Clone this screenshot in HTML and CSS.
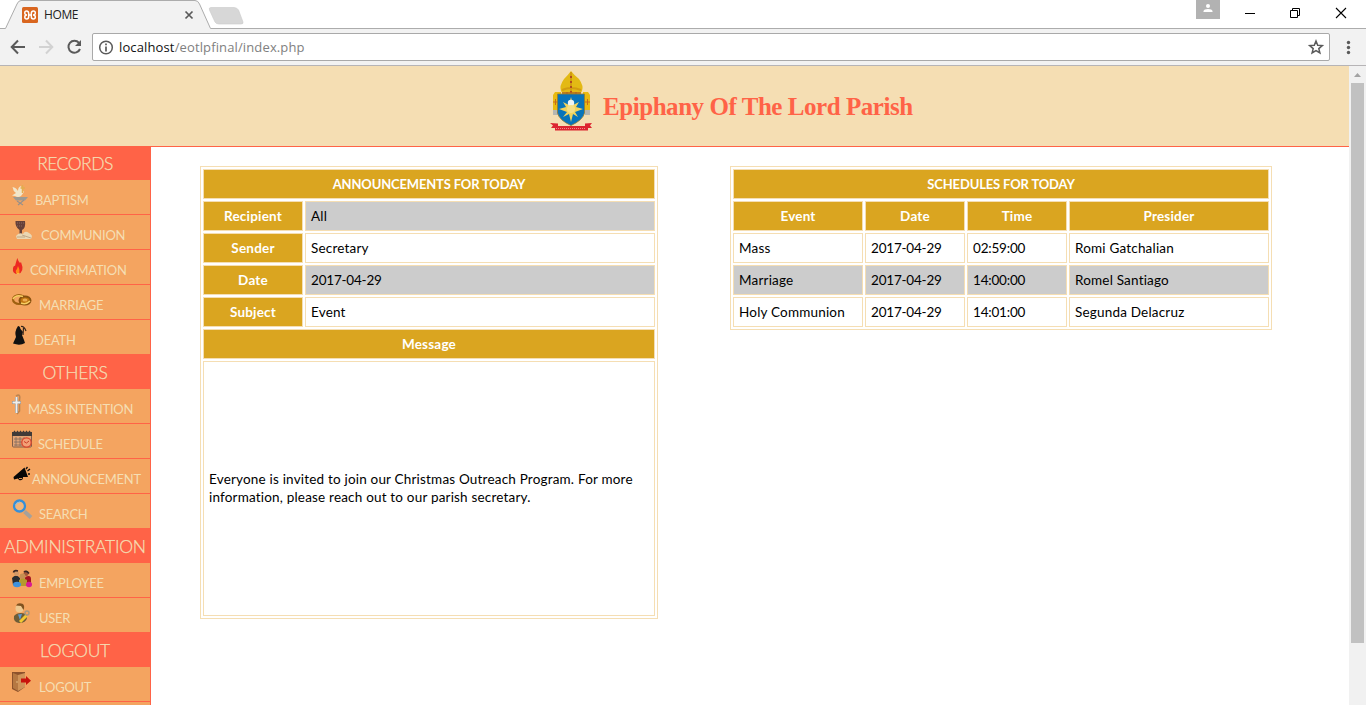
FILE: index.html
```html
<!DOCTYPE html>
<html lang="en">
<head>
<meta charset="utf-8">
<title>HOME</title>
<link rel="stylesheet" href="styles.css">
</head>
<body>
<header class="tabstrip">
  <svg class="tabstrip-art" width="1366" height="29" viewBox="0 0 1366 29">
    <path d="M0 28.5H5.5L17 4Q18.500 .5 21 .5H195Q198 .5 199.500 4L210.500 28.500H1366V29H0Z" fill="#f2f2f2"/>
    <path d="M0 28.500H5.500L17 4Q18.500 .5 21 .5H195Q198 .5 199.500 4L210.500 28.500H1366" fill="none" stroke="#acacac"/>
    <path d="M211 7.500H234Q237 7.500 238.500 10L243 22Q243.500 24 241 24H219Q216 24 215 22L209.500 10Q208.500 7.500 211 7.500Z" fill="#d7d7d7" stroke="#c9c9c9" stroke-width=".6"/>
    <rect x="22" y="7" width="16" height="16" rx="1.500" fill="#d9661f"/>
    <path d="M28.700 13.300Q28.500 11 26.700 11Q24.600 11 24.800 13.300Q25 15 27 15Q24.800 15 24.800 17Q24.800 19 26.700 19Q28.700 19 28.700 16.500V15H31.300V16.500Q31.300 19 33.300 19Q35.300 19 35.300 17Q35.300 15 33 15Q35.200 15 35.300 13.300Q35.400 11 33.300 11Q31.400 11 31.300 13.300V15H28.700Z" fill="none" stroke="#fff" stroke-width="1.500"/>
    <path d="M185.500 11.500L192.500 18.500M192.500 11.500L185.500 18.500" stroke="#5a5a5a" stroke-width="1.700"/>
    <rect x="1196" width="24" height="19" fill="#b2b2b2"/>
    <circle cx="1208" cy="6" r="2" fill="#fff"/>
    <path d="M1203.500 12V11Q1204 9 1208 9T1212.500 11V12Z" fill="#fff"/>
    <path d="M1245 13.500H1255" stroke="#000"/>
    <path d="M1290.500 10.500H1297.500V17.500H1290.500ZM1292.500 10V8.500H1299.500V15.500H1298" fill="none" stroke="#000"/>
    <path d="M1336 8L1346 18M1346 8L1336 18" stroke="#000" stroke-width="1.100"/>
  </svg>
  <span class="tab-title">HOME</span>
</header>
<div class="toolbar">
  <svg width="92" height="36" viewBox="0 0 92 36">
    <path d="M25 18H12M18 11.500L11.700 18L18 24.500" fill="none" stroke="#5a5a5a" stroke-width="2"/>
    <path d="M39 18H52M46 11.500L52.300 18L46 24.500" fill="none" stroke="#d2d2d2" stroke-width="2"/>
    <path d="M79 13.800A6 6 0 1 0 80 20" fill="none" stroke="#5a5a5a" stroke-width="2"/>
    <path d="M81 11V17H75Z" fill="#5a5a5a"/>
  </svg>
  <div class="address">
    <svg width="26" height="25" viewBox="0 0 26 25">
      <circle cx="13" cy="12.500" r="6.300" fill="none" stroke="#5a5a5a" stroke-width="1.500"/>
      <path d="M13 11.500V16.500M13 8.500V10.200" stroke="#5a5a5a" stroke-width="1.700"/>
    </svg>
    <span class="url">localhost<span class="url-path">/eotlpfinal/index.php</span></span>
    <svg class="star" width="28" height="25" viewBox="0 0 28 25">
      <path d="M15 6L16.700 10.300L21.300 10.600L17.800 13.600L18.900 18L15 15.600L11.100 18L12.200 13.600L8.700 10.600L13.300 10.300Z" fill="none" stroke="#5a5a5a" stroke-width="1.500"/>
    </svg>
  </div>
  <svg width="36" height="36" viewBox="0 0 36 36">
    <g fill="#5a5a5a"><circle cx="18.500" cy="13.500" r="1.700"/><circle cx="18.500" cy="18.500" r="1.700"/><circle cx="18.500" cy="23.500" r="1.700"/></g>
  </svg>
</div>
<div class="viewport">
  <div class="page">
    <div class="banner">
      <svg class="crest" width="44" height="62" viewBox="0 0 44 62">
        <path d="M13 30Q14 25 11 21Q9 16 14 9Q18 5 21 1Q24 5 29 9Q34 16 32 21Q29 25 30 30Z" fill="#e3b914"/>
        <path d="M21 2V30M12 20Q21 16 31 20" fill="none" stroke="#d29c10" stroke-width="2"/>
        <path d="M21 6V28" stroke="#b14b20" stroke-width="2" stroke-dasharray="2 3"/>
        <path d="M12 23H31M17 22V25M26 22V25" stroke="#b5691b" stroke-width="1.500"/>
        <path d="M5 22H11V40H3V25ZM33 22H38L40 25V40H33Z" fill="#e8ba12"/>
        <path d="M3 32H8M35 32H40M5.500 29V35M37.500 29V35" stroke="#c96a1a"/>
        <path d="M3 40H8V45H3ZM35 40H40V45H35Z" fill="#b7b7b1"/>
        <path d="M7.500 24H34.500V43Q33 50 21 55.500Q9 50 7.500 43Z" fill="#0874ba" stroke="#967b31" stroke-width=".8"/>
        <path d="M21 27L23 35L29 32L26 37L33 39L25 42L28 47L23 44L21 52L19 44L13 47L17 42L9 39L16 37L13 32L19 35Z" fill="#f2d35e"/>
        <circle cx="21" cy="33" r="3.200" fill="#eef4f4"/><circle cx="21" cy="39" r="4" fill="#f5df87"/>
        <path d="M0 53L8 53.500V56H35V53.500L42 53L40 55.500L42 58H38V60.500H5V58H1L3 55.500Z" fill="#dc2430"/>
        <path d="M6 58.500H36" stroke="#f3868c" stroke-dasharray="1 1"/>
      </svg>
      <h1 class="parish">Epiphany Of The Lord Parish</h1>
    </div>
    <div class="columns">
      <nav class="sidebar">
        <h2 class="group first">RECORDS</h2>
        <a class="item baptism"><svg width="23" height="34" viewBox="12 0 23 34">
          <path d="M12.500 7Q16 7.500 18 11Q18 7 21 6L22 9L24 12L21 16Q18 18 15 16L12 15.500L16 13Q13 11 12.500 7Z" fill="#f2e6ca"/>
          <path d="M22.500 5V13M20.500 8H25" stroke="#e2ad4e" stroke-width="1.500"/>
          <path d="M13 17H28L25 20.500H16Z" fill="#9d9a93"/><path d="M17 21L23 25M24 20L18 25" stroke="#97908a" stroke-width="1.100"/>
        </svg><span>BAPTISM</span></a>
        <a class="item communion"><svg width="29" height="34" viewBox="12 0 29 34">
          <path d="M15.500 6H25Q26 13 22 15V20H25V21H17V20H19.500V15Q15 12 15.500 6Z" fill="#654039"/>
          <path d="M17 8H24M17 11H23" stroke="#8e6961" stroke-dasharray="1 1"/>
          <path d="M16 21Q19 17 23 19Q25 15 29 18Q31 19 32 21L31 24H17Z" fill="#ead7b3"/>
          <path d="M17 22H25M22 20L31 23" stroke="#b69c7c" stroke-width=".8"/>
        </svg><span>COMMUNION</span></a>
        <a class="item confirmation"><svg width="18" height="34" viewBox="12 0 18 34">
          <path d="M17.300 8Q18.500 12 20 13L21 12Q25 22 18 24Q12 24 13 18Q14 15 15 16Q16 12 17.300 8Z" fill="#ed2922"/>
          <path d="M18 16Q21 22 18 24Q14 22 17 19Z" fill="#ff8c19"/><path d="M16 22Q18 25 20 22L19 24H17Z" fill="#fff050"/>
        </svg><span>CONFIRMATION</span></a>
        <a class="item marriage"><svg width="27" height="34" viewBox="12 0 27 34">
          <ellipse cx="19" cy="14.500" rx="6" ry="4.500" fill="none" stroke="#9f6110" stroke-width="2.200"/>
          <ellipse cx="25" cy="15.500" rx="5.500" ry="4" fill="#c17510" stroke="#8a5210" stroke-width="2"/>
          <path d="M13 14Q16 9 23 11.500M21 18Q26 20 30 16" fill="none" stroke="#f7ce62" stroke-width="1.500"/>
          <ellipse cx="25" cy="15" rx="2.500" ry="1.500" fill="#eead55"/>
        </svg><span>MARRIAGE</span></a>
        <a class="item death"><svg width="22" height="34" viewBox="12 0 22 34">
          <path d="M18 6Q20 6 20.500 9L23 12L22 15L24 20L25 23Q20 26 13 23.500L16 17Q14 12 18 6Z" fill="#111"/>
          <path d="M23.500 8L23 15M21 6.500Q24 6 26 11" fill="none" stroke="#33251b" stroke-width="1.200"/>
        </svg><span>DEATH</span></a>
        <h2 class="group">OTHERS</h2>
        <a class="item mass"><svg width="16" height="34" viewBox="12 0 16 34">
          <path d="M16 7Q21 4 19.500 11V22L17 25" fill="none" stroke="#bd8551" stroke-width="1.600"/>
          <path d="M16.500 8V24M12 13.500H21" stroke="#8c8681" stroke-width="3"/>
          <path d="M16.500 8V24M12.500 13.500H20.500" stroke="#f1eee9" stroke-width="1.900"/>
        </svg><span>MASS INTENTION</span></a>
        <a class="item schedule"><svg width="26" height="34" viewBox="12 0 26 34">
          <rect x="12.500" y="8" width="19" height="15" rx="1" fill="#e2a476" stroke="#805d49"/>
          <path d="M12 8H32V12H12Z" fill="#403a38"/><path d="M14 7.500H31" stroke="#403a38" stroke-width="1.500" stroke-dasharray="1 2"/>
          <path d="M14 15H24M14 18H22M14 21H22M16 13V22M20 13V22M24 13V17" stroke="#7e6b5f" stroke-width=".8"/>
          <circle cx="26.500" cy="18.500" r="4.700" fill="#f3a077" stroke="#d9452d" stroke-width="1.300"/><path d="M24 17.500L26.500 19L29 17" fill="none" stroke="#cb3b25"/>
        </svg><span>SCHEDULE</span></a>
        <a class="item announcement"><svg width="20" height="34" viewBox="12 0 20 34">
          <path d="M13.500 18L24.500 8.500L28 18L23 18Q23 22 19 21L18 19.500L14 20.500Z" fill="#070707"/>
          <path d="M19 19.500H22" stroke="#d28c53"/><path d="M26 10L27.500 8M27.500 12L30 10M28 15H30" stroke="#111" stroke-width="1.300"/>
        </svg><span>ANNOUNCEMENT</span></a>
        <a class="item search"><svg width="27" height="34" viewBox="12 0 27 34">
          <path d="M24.500 17.500L31 23.500" stroke="#a6a19b" stroke-width="3.800"/>
          <circle cx="19.500" cy="12" r="5.500" fill="#f4b57a" stroke="#358fd9" stroke-width="2.300"/><path d="M15.500 11Q17 8 20 8" fill="none" stroke="#82c2ed"/>
        </svg><span>SEARCH</span></a>
        <h2 class="group">ADMINISTRATION</h2>
        <a class="item employee"><svg width="27" height="34" viewBox="12 0 27 34">
          <path d="M12 15Q16 10 20 15V22H13Z" fill="#282c30"/><path d="M25 14Q31 11 31 16V20H25Z" fill="#a51520"/>
          <circle cx="16.500" cy="10.500" r="2.500" fill="#d39a68"/><circle cx="26" cy="10.500" r="2.500" fill="#a3583a"/>
          <path d="M13.500 9.500Q14 7 18 8M24 9Q26 7 29 10.500" fill="none" stroke="#3a2724" stroke-width="1.700"/>
          <circle cx="22.500" cy="13.500" r="3" fill="#c58f52"/><path d="M19 17Q23 14 27 17V23H19Z" fill="#b49a2d"/>
          <ellipse cx="17" cy="21.500" rx="4" ry="2.700" fill="#3f92dc"/><ellipse cx="29" cy="21.500" rx="3" ry="2.700" fill="#d91a91"/>
        </svg><span>EMPLOYEE</span></a>
        <a class="item user"><svg width="27" height="34" viewBox="12 0 27 34">
          <circle cx="19.500" cy="10.500" r="4" fill="#edc890"/><path d="M16 7.500Q18 4 23 6Q25 8 23.500 12L21 8Z" fill="#80521f"/>
          <path d="M14 18Q18 13 26 16L27 20Q26 25 19 25Q13 24 14 18Z" fill="#6e5d38"/>
          <path d="M18 16.500L20 22L22 16Z" fill="#5d97cf"/><path d="M20 24L26.500 17.500" stroke="#f3c832" stroke-width="3"/><circle cx="27" cy="15" r="2" fill="none" stroke="#a89980" stroke-width="1.400"/>
        </svg><span>USER</span></a>
        <h2 class="group">LOGOUT</h2>
        <a class="item logout"><svg width="27" height="34" viewBox="12 0 27 34">
          <path d="M12 5H25V20L18 25L12 22Z" fill="#8d522c"/><path d="M13 6L18 8V24L13 21Z" fill="#b67842"/><path d="M18 8L25 6V20L18 24Z" fill="#d09459"/><circle cx="17" cy="15" r=".7" fill="#f4d69a"/>
          <path d="M21 11.500H26V9L31 13.700L26 18V15.500H21Z" fill="#c9130c"/>
        </svg><span>LOGOUT</span></a>
        <div class="item"></div>
      </nav>
      <main class="content">
        <table class="grid announcements">
          <colgroup><col class="w100"><col class="w350"></colgroup>
          <tr class="caption"><th colspan="2">ANNOUNCEMENTS FOR TODAY</th></tr>
          <tr class="shade"><th>Recipient</th><td>All</td></tr>
          <tr><th>Sender</th><td>Secretary</td></tr>
          <tr class="shade"><th>Date</th><td class="num">2017-04-29</td></tr>
          <tr><th>Subject</th><td>Event</td></tr>
          <tr><th colspan="2">Message</th></tr>
          <tr class="message"><td colspan="2">Everyone is invited to join our Christmas Outreach Program. For more<br>information, please reach out to our parish secretary.</td></tr>
        </table>
        <table class="grid schedules">
          <colgroup><col class="w130"><col class="w100"><col class="w100"><col class="w200"></colgroup>
          <tr class="caption"><th colspan="4">SCHEDULES FOR TODAY</th></tr>
          <tr><th>Event</th><th>Date</th><th>Time</th><th>Presider</th></tr>
          <tr><td>Mass</td><td class="num">2017-04-29</td><td class="num">02:59:00</td><td>Romi Gatchalian</td></tr>
          <tr class="shade"><td>Marriage</td><td class="num">2017-04-29</td><td class="num">14:00:00</td><td>Romel Santiago</td></tr>
          <tr><td>Holy Communion</td><td class="num">2017-04-29</td><td class="num">14:01:00</td><td>Segunda Delacruz</td></tr>
        </table>
      </main>
    </div>
  </div>
  <div class="scrollbar">
    <svg width="17" height="17" viewBox="0 0 17 17"><path d="M5 11L8.500 7L12 11Z" fill="#a3a3a3"/></svg>
    <div class="thumb"></div>
  </div>
</div>
</body>
</html>
```
FILE: styles.css
```css
* { box-sizing: border-box; }
body { margin: 0; width: 1366px; height: 705px; overflow: hidden; background: #fff; font-family: Lato, "Liberation Sans", sans-serif; }
svg { display: block; flex: none; overflow: visible; }

.tabstrip { position: relative; height: 29px; padding: 7px 0 0 44px; }
.tabstrip-art { position: absolute; left: 0; top: 0; }
.tab-title { position: relative; display: block; font: 12px/16px "Open Sans", sans-serif; letter-spacing: -.4px; color: #222; }

.toolbar { display: flex; height: 37px; background: #f2f2f2; border-bottom: 1px solid #b6b4b6; }
.address { display: flex; align-items: center; width: 1238px; height: 28px; margin-top: 4px; background: #fff; border: 1px solid #a9a9a9; border-radius: 2px; }
.url { flex: 1; font: 13px/26px "Open Sans", sans-serif; letter-spacing: .13px; color: #111; }
.url-path { color: #808080; }

.viewport { display: flex; height: 639px; }
.page { width: 1349px; height: 639px; overflow: hidden; }
.banner { display: flex; height: 81px; padding: 4px 0 0 550px; background: #f5deb3; border-bottom: 1px solid #ff6347; }
.parish { margin: 20px 0 0 9px; font: bold 25px/34px "Old English Text MT", "Liberation Serif", serif; letter-spacing: -.45px; color: #ff6347; white-space: nowrap; }
.columns { display: flex; }

.sidebar { width: 151px; height: 558px; overflow: hidden; border-right: 1px solid #ff6347; }
.group { height: 34px; margin: 0; font-size: 17.5px; font-weight: 300; line-height: 36px; letter-spacing: -.25px; -webkit-text-stroke: .25px #f5deb3; text-align: center; white-space: nowrap; color: #f5deb3; background: #ff6347; }
.group.first { height: 33px; line-height: 34px; letter-spacing: -.5px; }
.item { display: flex; height: 35px; padding-left: 12px; border-bottom: 1px solid #ff6347; background: #f4a460; color: #f5deb3; font-size: 13px; line-height: 41px; letter-spacing: -.25px; white-space: nowrap; }

.content { display: flex; align-items: flex-start; gap: 72px; padding: 19px 0 0 49px; }
.grid { table-layout: fixed; border: 1px solid #f5deb3; border-collapse: separate; border-spacing: 2px; font-size: 13.5px; line-height: 18px; letter-spacing: .19px; color: #000; }
.announcements { width: 458px; }
.schedules { width: 542px; }
.grid th, .grid td { height: 30px; padding: 0 5px; border: 1px solid #f5deb3; white-space: nowrap; }
.grid th { background: #daa520; color: #fff; font-weight: 700; text-align: center; }
.grid .caption th { font-size: 13px; letter-spacing: -.15px; }
.grid .num { letter-spacing: -.2px; }
.grid .shade td { background: #ccc; }
.grid .message td { height: 255px; padding-bottom: 2px; }
.w100 { width: 100px; }
.w130 { width: 130px; }
.w200 { width: 200px; }
.w350 { width: 350px; }

.scrollbar { width: 17px; height: 639px; background: #f1f1f1; }
.thumb { width: 13px; height: 560px; margin: 0 auto; background: #c1c1c1; }
```
